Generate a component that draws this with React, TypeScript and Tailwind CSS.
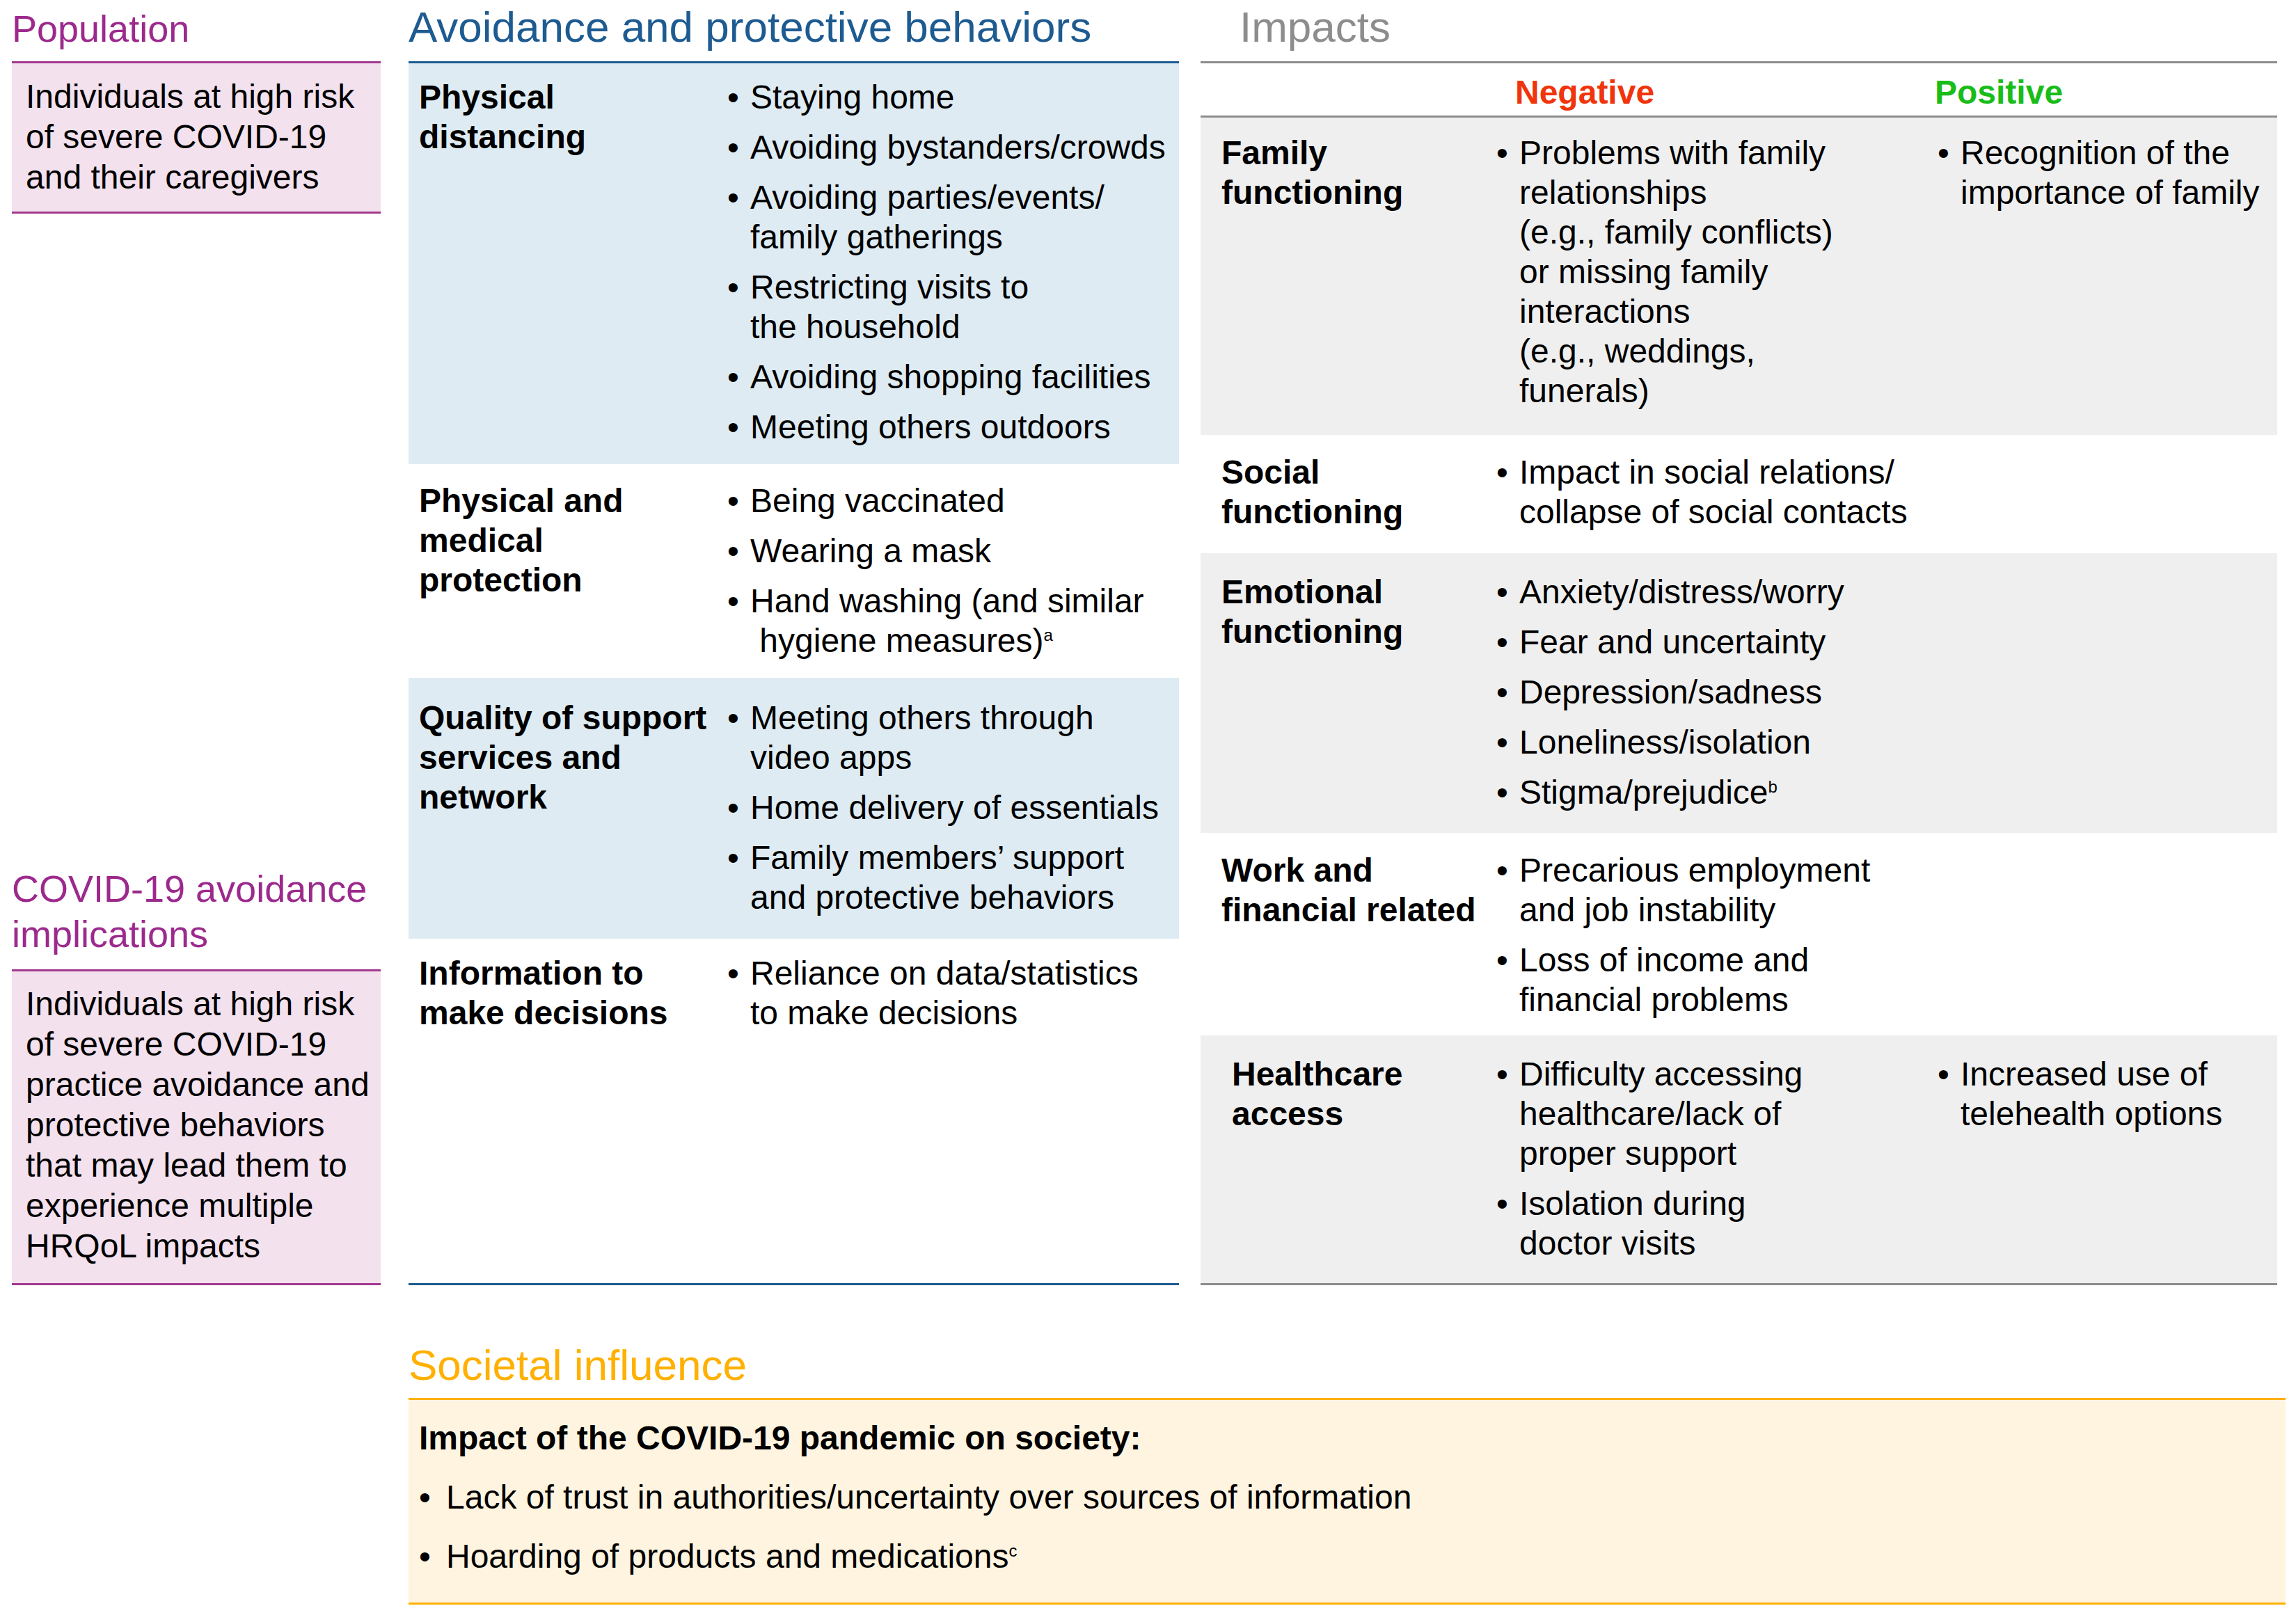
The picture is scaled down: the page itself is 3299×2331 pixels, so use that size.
import type { ReactNode } from "react";

type Item = ReactNode[];

function Sup({ children }: { children: ReactNode }) {
  return <sup className="top-[-16px] text-[24px]">{children}</sup>;
}

function Bullets({ items, bullet = "w-[33px]", gap = "gap-[15px]" }: { items: Item[]; bullet?: string; gap?: string }) {
  return (
    <ul className={`flex flex-col ${gap}`}>
      {items.map((lines, i) => (
        <li key={i} className="flex">
          <span className={`${bullet} shrink-0`}>•</span>
          <span className="whitespace-nowrap">
            {lines.map((l, j) => (
              <span key={j} className="block">
                {l}
              </span>
            ))}
          </span>
        </li>
      ))}
    </ul>
  );
}

function MidRow({ bg, h, pt, label, items }: { bg: string; h: string; pt: string; label: ReactNode; items: Item[] }) {
  return (
    <div className={`flex ${bg} ${h} ${pt}`}>
      <div className="w-[458px] shrink-0 pl-[15px] font-bold whitespace-nowrap">{label}</div>
      <Bullets items={items} />
    </div>
  );
}

function ImpactRow({
  bg,
  h,
  pt,
  label,
  labelPad = "pl-[30px]",
  negative,
  positive = [],
}: {
  bg: string;
  h: string;
  pt: string;
  label: ReactNode;
  labelPad?: string;
  negative: Item[];
  positive?: Item[];
}) {
  return (
    <div className={`flex ${bg} ${h} ${pt}`}>
      <div className={`w-[425px] shrink-0 ${labelPad} font-bold whitespace-nowrap`}>{label}</div>
      <div className="w-[634px] shrink-0">
        <Bullets items={negative} />
      </div>
      <div>{positive.length > 0 && <Bullets items={positive} />}</div>
    </div>
  );
}

export default function App() {
  return (
    <div className="h-[2331px] w-[3299px] overflow-hidden bg-white font-['Liberation_Sans',Arial,sans-serif] text-[48px] leading-[57px] text-black">
      <div className="flex pl-[17px]">
        {/* Population / implications */}
        <div className="flex h-[1847px] w-[530px] shrink-0 flex-col justify-between">
          <div>
            <div className="h-[88px] pt-[14px] text-[54px] leading-[54px] text-[#9c2a8d]">Population</div>
            <div className="border-y-[3px] border-[#a2388f] bg-[#f3e1ee] pt-[19px] pb-[20px] pl-[20px] leading-[58px]">
              Individuals at high risk
              <br />
              of severe COVID-19
              <br />
              and their caregivers
            </div>
          </div>
          <div>
            <div className="mb-[18px] text-[54px] leading-[65px] text-[#9c2a8d]">
              COVID-19 avoidance
              <br />
              implications
            </div>
            <div className="border-y-[3px] border-[#a2388f] bg-[#f3e1ee] pt-[18px] pb-[24px] pl-[20px] leading-[58px]">
              Individuals at high risk
              <br />
              of severe COVID-19
              <br />
              practice avoidance and
              <br />
              protective behaviors
              <br />
              that may lead them to
              <br />
              experience multiple
              <br />
              HRQoL impacts
            </div>
          </div>
        </div>

        {/* Avoidance and protective behaviors */}
        <div className="ml-[40px] w-[1107px] shrink-0">
          <div className="h-[88px] pt-[8px] text-[62px] leading-[62px] whitespace-nowrap text-[#1d5b91]">
            Avoidance and protective behaviors
          </div>
          <div className="border-y-[3px] border-[#1d5b91]">
            <MidRow
              bg="bg-[#deebf3]"
              h="h-[576px]"
              pt="pt-[20px]"
              label={
                <>
                  Physical
                  <br />
                  distancing
                </>
              }
              items={[
                ["Staying home"],
                ["Avoiding bystanders/crowds"],
                ["Avoiding parties/events/", "family gatherings"],
                ["Restricting visits to", "the household"],
                ["Avoiding shopping facilities"],
                ["Meeting others outdoors"],
              ]}
            />
            <MidRow
              bg="bg-white"
              h="h-[307px]"
              pt="pt-[24px]"
              label={
                <>
                  Physical and
                  <br />
                  medical
                  <br />
                  protection
                </>
              }
              items={[
                ["Being vaccinated"],
                ["Wearing a mask"],
                [
                  "Hand washing (and similar",
                  <>
                    {"\u00a0hygiene measures)"}
                    <Sup>a</Sup>
                  </>,
                ],
              ]}
            />
            <MidRow
              bg="bg-[#deebf3]"
              h="h-[375px]"
              pt="pt-[29px]"
              label={
                <>
                  Quality of support
                  <br />
                  services and
                  <br />
                  network
                </>
              }
              items={[
                ["Meeting others through", "video apps"],
                ["Home delivery of essentials"],
                ["Family members\u2019 support", "and protective behaviors"],
              ]}
            />
            <MidRow
              bg="bg-white"
              h="h-[495px]"
              pt="pt-[21px]"
              label={
                <>
                  Information to
                  <br />
                  make decisions
                </>
              }
              items={[["Reliance on data/statistics", "to make decisions"]]}
            />
          </div>
        </div>

        {/* Impacts */}
        <div className="ml-[31px] w-[1547px] shrink-0">
          <div className="h-[88px] pt-[8px] pl-[56px] text-[62px] leading-[62px] text-[#8d8d8d]">Impacts</div>
          <div className="flex h-[78px] border-t-[3px] border-[#8c8c8c] pt-[13px] font-bold">
            <div className="w-[425px] shrink-0" />
            <div className="w-[630px] shrink-0 pl-[27px] text-[#f0340c]">Negative</div>
            <div className="text-[#19bd19]">Positive</div>
          </div>
          <div className="border-y-[3px] border-[#8c8c8c]">
            <ImpactRow
              bg="bg-[#efefef]"
              h="h-[456px]"
              pt="pt-[22px]"
              label={
                <>
                  Family
                  <br />
                  functioning
                </>
              }
              negative={[
                [
                  "Problems with family",
                  "relationships",
                  "(e.g., family conflicts)",
                  "or missing family",
                  "interactions",
                  "(e.g., weddings,",
                  "funerals)",
                ],
              ]}
              positive={[["Recognition of the", "importance of family"]]}
            />
            <ImpactRow
              bg="bg-white"
              h="h-[170px]"
              pt="pt-[25px]"
              label={
                <>
                  Social
                  <br />
                  functioning
                </>
              }
              negative={[["Impact in social relations/", "collapse of social contacts"]]}
            />
            <ImpactRow
              bg="bg-[#efefef]"
              h="h-[402px]"
              pt="pt-[27px]"
              label={
                <>
                  Emotional
                  <br />
                  functioning
                </>
              }
              negative={[
                ["Anxiety/distress/worry"],
                ["Fear and uncertainty"],
                ["Depression/sadness"],
                ["Loneliness/isolation"],
                [
                  <>
                    Stigma/prejudice<Sup>b</Sup>
                  </>,
                ],
              ]}
            />
            <ImpactRow
              bg="bg-white"
              h="h-[291px]"
              pt="pt-[25px]"
              label={
                <>
                  Work and
                  <br />
                  financial related
                </>
              }
              negative={[
                ["Precarious employment", "and job instability"],
                ["Loss of income and", "financial problems"],
              ]}
            />
            <ImpactRow
              bg="bg-[#efefef]"
              h="h-[356px]"
              pt="pt-[27px]"
              labelPad="pl-[45px]"
              label={
                <>
                  Healthcare
                  <br />
                  access
                </>
              }
              negative={[
                ["Difficulty accessing", "healthcare/lack of", "proper support"],
                ["Isolation during", "doctor visits"],
              ]}
              positive={[["Increased use of", "telehealth options"]]}
            />
          </div>
        </div>
      </div>

      {/* Societal influence */}
      <div className="ml-[587px] w-[2697px]">
        <div className="mb-[16px] pt-[84px] text-[62px] leading-[62px] text-[#ffb000]">Societal influence</div>
        <div className="flex flex-col gap-[28px] border-y-[3px] border-[#ffb000] bg-[#fff4e0] pt-[26px] pb-[38px] pl-[15px]">
          <div className="font-bold">Impact of the COVID-19 pandemic on society:</div>
          <Bullets
            gap="gap-[28px]"
            bullet="w-[39px]"
            items={[
              ["Lack of trust in authorities/uncertainty over sources of information"],
              [
                <>
                  Hoarding of products and medications<Sup>c</Sup>
                </>,
              ],
            ]}
          />
        </div>
      </div>
    </div>
  );
}
